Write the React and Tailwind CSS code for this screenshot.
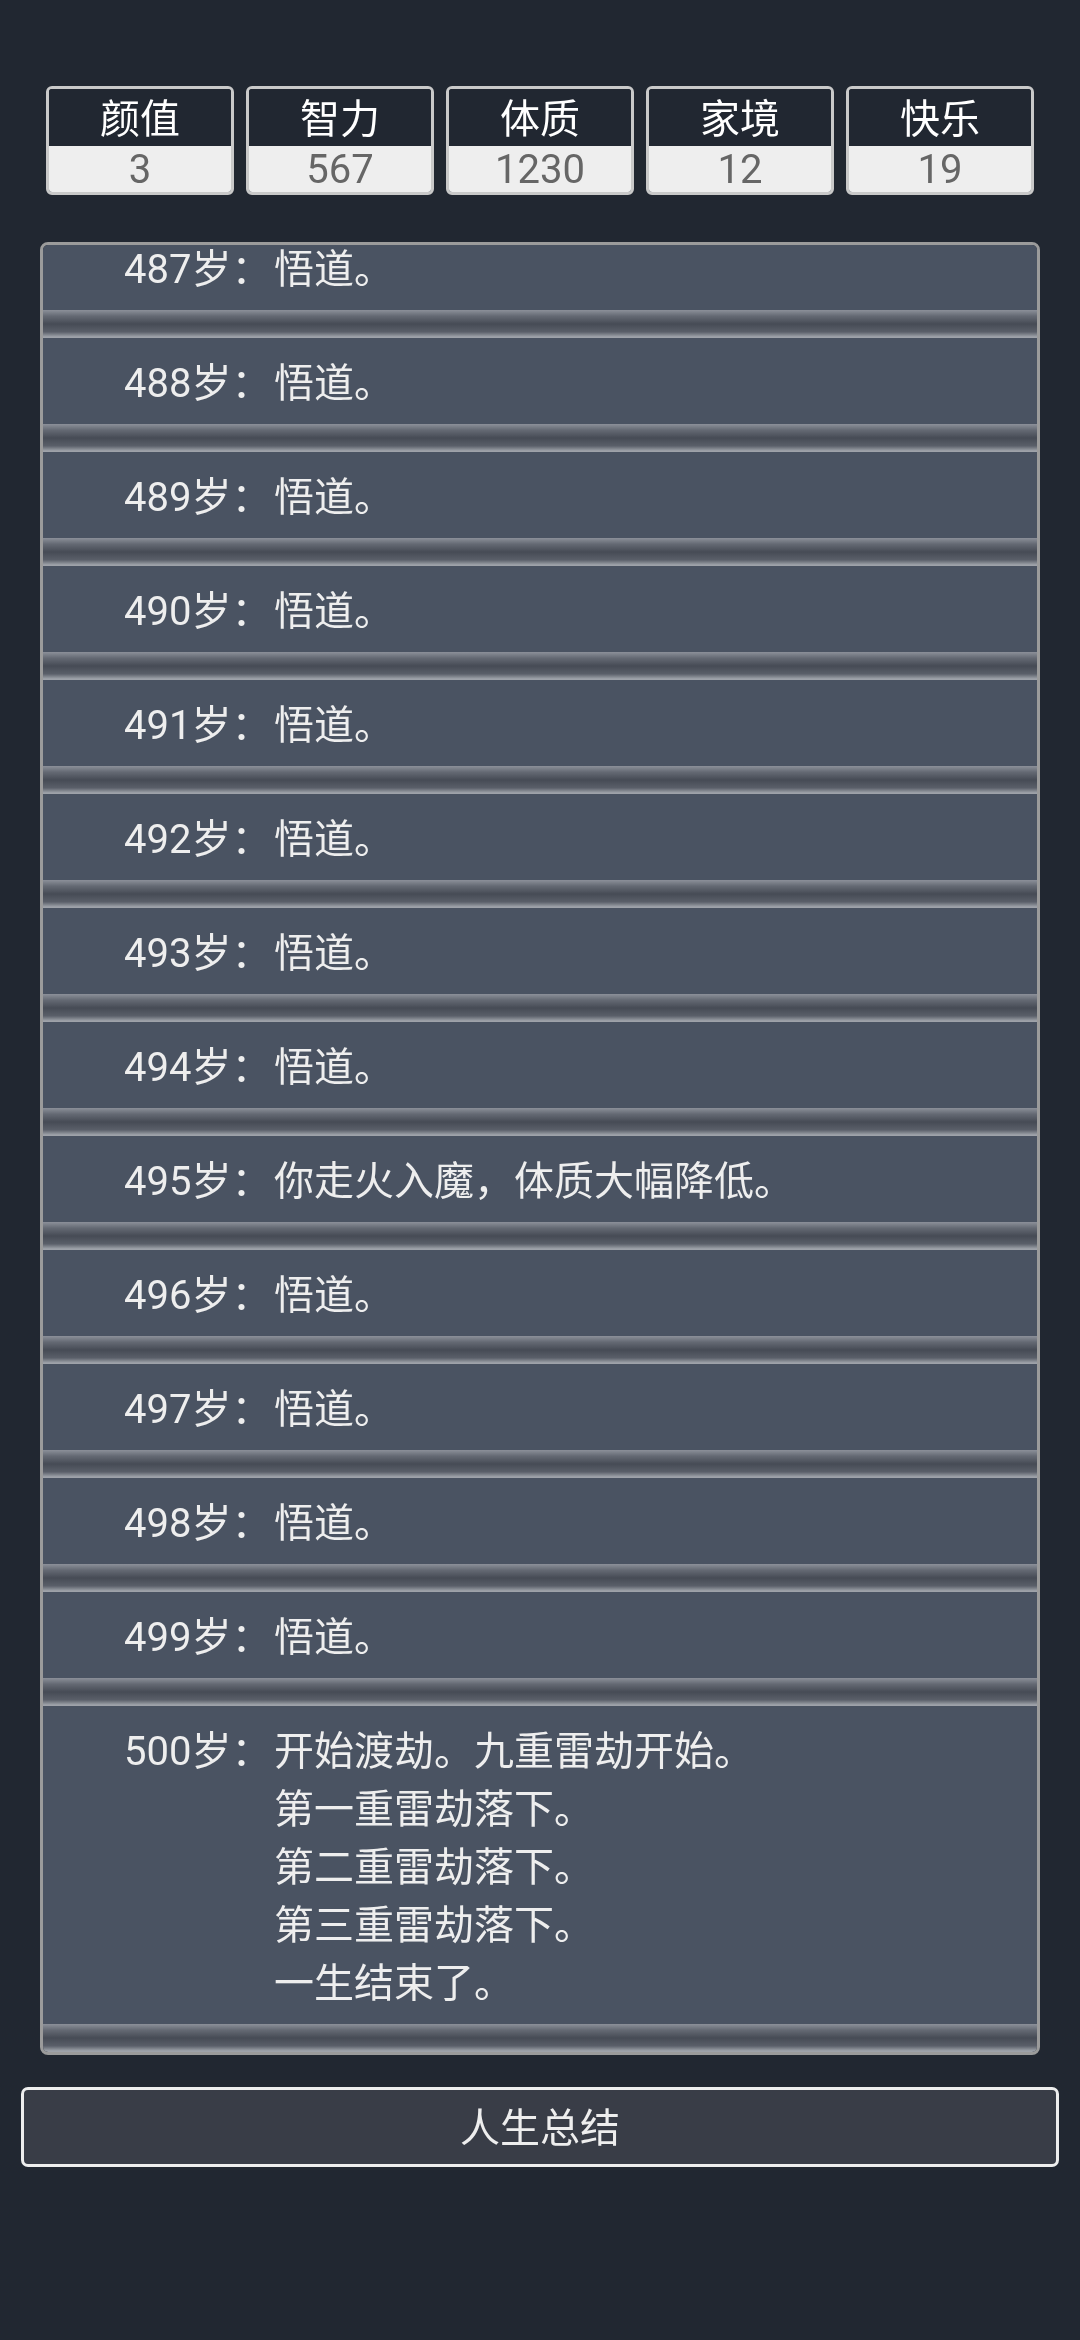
import { useEffect, useRef } from 'react'

const stats = [
  { label: '颜值', value: 3 },
  { label: '智力', value: 567 },
  { label: '体质', value: 1230 },
  { label: '家境', value: 12 },
  { label: '快乐', value: 19 },
]

const events = []
for (let age = 478; age < 500; age++) {
  events.push({ age, lines: [age === 495 ? '你走火入魔，体质大幅降低。' : '悟道。'] })
}
events.push({
  age: 500,
  lines: ['开始渡劫。九重雷劫开始。', '第一重雷劫落下。', '第二重雷劫落下。', '第三重雷劫落下。', '一生结束了。'],
})

export default function App() {
  const listRef = useRef(null)

  useEffect(() => {
    const el = listRef.current
    if (el) el.scrollTop = el.scrollHeight
  }, [])

  return (
    <div className="w-full min-h-[2340px] bg-[#212731] text-[#eeeeee] font-['Roboto','Noto_Sans_CJK_SC',sans-serif]">
      <div className="flex gap-[12px] px-[46px] pt-[86px]">
        {stats.map(s => (
          <div key={s.label} className="flex-1 h-[109px] flex flex-col overflow-hidden rounded-[6px] border-[3px] border-[#c9c9c9]">
            <div className="h-[57px] pt-[4px] flex items-center justify-center bg-[#212731] text-[40px] leading-none text-white">
              {s.label}
            </div>
            <div className="flex-1 pt-[2px] flex items-center justify-center bg-[#eeeeee] text-[40px] leading-none text-[#666666]">
              {s.value}
            </div>
          </div>
        ))}
      </div>

      <div
        ref={listRef}
        className="mx-[40px] mt-[47px] h-[1813px] overflow-y-auto [scrollbar-width:none] rounded-[8px] border-[3px] border-[#9b9b9b] bg-[#4a5362]"
      >
        {events.map(ev => (
          <div key={ev.age}>
            <div className="flex pt-[17px] pb-[11px] pl-[81px] pr-[20px] text-[40px] leading-[58px]">
              <span className="w-[150px] shrink-0 whitespace-nowrap">{ev.age}岁：</span>
              <div className="flex-1">
                {ev.lines.map((l, i) => <div key={i}>{l}</div>)}
              </div>
            </div>
            <div className="h-[28px] bg-[linear-gradient(to_bottom,#8c9099_0%,#646973_22%,#464b55_50%,#5a5f69_78%,#9ea2a9_96%)]" />
          </div>
        ))}
      </div>

      <button className="mx-[21px] mt-[32px] pt-[4px] block w-[1038px] h-[80px] rounded-[7px] border-[3px] border-[#eeeeee] bg-[#393d47] text-[40px] text-[#eeeeee]">
        人生总结
      </button>
    </div>
  )
}
